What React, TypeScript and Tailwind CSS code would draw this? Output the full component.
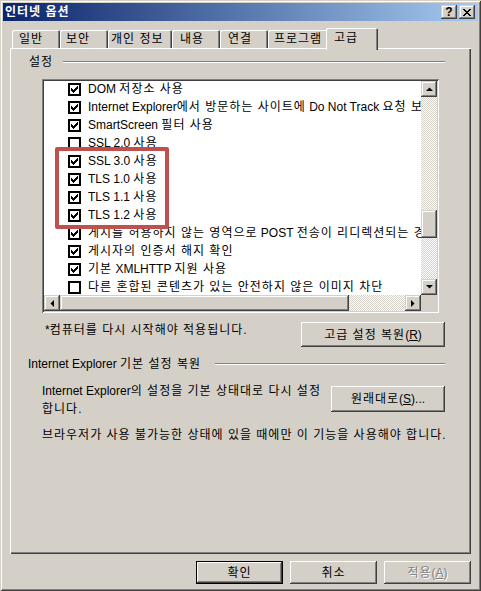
import React from 'react';

const raised = 'shadow-[inset_-1px_-1px_0_#404040,inset_1px_1px_0_#fff,inset_-2px_-2px_0_#808080,inset_2px_2px_0_#d4d0c8]';
const scrollBtn = 'shadow-[inset_-1px_-1px_0_#404040,inset_1px_1px_0_#d4d0c8,inset_-2px_-2px_0_#808080,inset_2px_2px_0_#fff]';
const checker = 'bg-[image:repeating-conic-gradient(#fff_0%_25%,#d4d0c8_0%_50%)] bg-[length:2px_2px]';

// Gulim is wider than Noto's hangul: give hangul runs (and the spaces inside them) a little tracking
function K(s: string) {
  return s.split(/([가-힣]+(?:\s+[가-힣]+)*)/).map((part, i) =>
    /[가-힣]/.test(part) ? <span key={i} className="tracking-[1px]">{part}</span> : part
  );
}

const rows: { label: string; on: boolean }[] = [
  { label: 'DOM 저장소 사용', on: true },
  { label: 'Internet Explorer에서 방문하는 사이트에 Do Not Track 요청 보내기', on: true },
  { label: 'SmartScreen 필터 사용', on: true },
  { label: 'SSL 2.0 사용', on: false },
  { label: 'SSL 3.0 사용', on: true },
  { label: 'TLS 1.0 사용', on: true },
  { label: 'TLS 1.1 사용', on: true },
  { label: 'TLS 1.2 사용', on: true },
  { label: '게시를 허용하지 않는 영역으로 POST 전송이 리디렉션되는 경우 경고', on: true },
  { label: '게시자의 인증서 해지 확인', on: true },
  { label: '기본 XMLHTTP 지원 사용', on: true },
  { label: '다른 혼합된 콘텐츠가 있는 안전하지 않은 이미지 차단', on: false },
];

const tabs = [
  { label: '일반', w: 'w-[48px] pl-[7px]' },
  { label: '보안', w: 'w-[48px] pl-[6px]' },
  { label: '개인 정보', w: 'w-[64px] pl-[3px]' },
  { label: '내용', w: 'w-[48px] pl-[8px]' },
  { label: '연결', w: 'w-[48px] pl-[8px]' },
  { label: '프로그램', w: 'w-[60px] pl-[6px]' },
];

function Check({ on }: { on: boolean }) {
  return (
    <span className="w-[13px] h-[13px] border-2 border-black bg-white flex items-center justify-center shrink-0">
      {on && (
        <svg width="7" height="7" viewBox="0 0 7 7" shapeRendering="crispEdges">
          {[2, 3, 4, 3, 2, 1, 0].map((y, x) => (
            <rect key={x} x={x} y={y} width="1" height="3" fill="#000" />
          ))}
        </svg>
      )}
    </span>
  );
}

function Arrow({ dir }: { dir: 'up' | 'down' | 'left' | 'right' }) {
  const pts = {
    up: '0,4 7,4 3.5,0.5',
    down: '0,0 7,0 3.5,3.5',
    left: '4,0 4,7 0.5,3.5',
    right: '0,0 0,7 3.5,3.5',
  }[dir];
  const v = dir === 'up' || dir === 'down';
  return (
    <svg width={v ? 7 : 4} height={v ? 4 : 7} viewBox={v ? '0 0 7 4' : '0 0 4 7'}>
      <polygon points={pts} fill="#000" />
    </svg>
  );
}

function Btn({ children, className = '', def = false, disabled = false }: { children: React.ReactNode; className?: string; def?: boolean; disabled?: boolean }) {
  return (
    <div className={`${def ? 'border border-black' : ''} ${className} flex`}>
      <div className={`flex-1 flex items-center justify-center ${raised} leading-[14px] ${disabled ? 'text-[#808080] [text-shadow:1px_1px_0_#fff]' : ''}`}>
        {children}
      </div>
    </div>
  );
}

function GroupHead({ label, pl, gap }: { label: string; pl: string; gap: string }) {
  return (
    <div className={`flex items-center h-[16px] ${pl} pr-[26px]`}>
      <span className="leading-[16px] whitespace-nowrap">{K(label)}</span>
      <div className={`flex-1 ${gap} border-t border-t-[#808080] border-b border-b-white`} />
    </div>
  );
}

export default function App() {
  return (
    <div className="w-[481px] h-[591px] bg-[#d4d0c8] p-[3px] flex flex-col text-[12px] text-black select-none font-[family-name:'Liberation_Sans','Noto_Sans_CJK_KR',sans-serif] shadow-[inset_1px_1px_0_#d4d0c8,inset_-1px_-1px_0_#404040,inset_2px_2px_0_#fff,inset_-2px_-2px_0_#808080]">
      {/* title bar */}
      <div className="h-[18px] shrink-0 flex items-center pl-[2px] pr-[3px] bg-[linear-gradient(to_right,#0a246a,#a6caf0)]">
        <span className="flex-1 text-white font-bold leading-[18px]">{K('인터넷 옵션')}</span>
        <div className={`w-[16px] h-[14px] flex items-center justify-center ${scrollBtn} bg-[#d4d0c8]`}>
          <span className="font-bold text-[12px] leading-[12px] font-[family-name:'Liberation_Sans',sans-serif]">?</span>
        </div>
        <div className={`ml-[2px] w-[16px] h-[14px] flex items-center justify-center ${scrollBtn} bg-[#d4d0c8]`}>
          <svg width="8" height="7" viewBox="0 0 8 7" shapeRendering="crispEdges">
            <path d="M0 0h2l2 2.5 2-2.5h2l-3 3.5 3 3.5h-2l-2-2.5-2 2.5h-2l3-3.5z" fill="#000" />
          </svg>
        </div>
      </div>

      {/* tabs */}
      <div className="mt-[7px] h-[20px] shrink-0 flex items-start pl-[9px]">
        {tabs.map(t => (
          <div key={t.label} className={`${t.w} mt-[2px] h-[18px] rounded-t-[2px] leading-[18px] whitespace-nowrap shadow-[inset_1px_1px_0_#fff,inset_-1px_0_0_#404040,inset_-2px_0_0_#808080]`}>
            {K(t.label)}
          </div>
        ))}
        <div className="relative z-10 -ml-[2px] w-[52px] h-[22px] pl-[8px] pb-[2px] leading-[20px] bg-[#d4d0c8] rounded-t-[2px] shadow-[inset_1px_1px_0_#fff,inset_-1px_0_0_#404040,inset_-2px_0_0_#808080]">
          {K('고급')}
        </div>
      </div>

      {/* panel */}
      <div className="mx-[7px] h-[506px] shrink-0 pt-[6px] flex flex-col shadow-[inset_1px_1px_0_#fff,inset_-1px_-1px_0_#404040,inset_-2px_-2px_0_#808080]">
        <GroupHead label="설정" pl="pl-[19px]" gap="ml-[10px]" />

        {/* list box */}
        <div className="relative mt-[9px] ml-[32px] w-[397px] h-[234px] p-[2px] flex flex-col bg-white shadow-[inset_1px_1px_0_#808080,inset_-1px_-1px_0_#fff,inset_2px_2px_0_#404040,inset_-2px_-2px_0_#d4d0c8]">
          <div className="flex flex-1 min-h-0">
            <div className="flex-1 overflow-hidden">
              <div className="-mt-[1px] flex flex-col">
                {rows.map(r => (
                  <div key={r.label} className="h-[18px] flex items-center pl-[24px] gap-[7px] whitespace-nowrap">
                    <Check on={r.on} />
                    <span className="leading-[18px]">{K(r.label)}</span>
                  </div>
                ))}
              </div>
            </div>
            <div className="w-[16px] flex flex-col">
              <div className={`h-[16px] flex items-center justify-center bg-[#d4d0c8] ${scrollBtn}`}><Arrow dir="up" /></div>
              <div className={`h-[113px] ${checker}`} />
              <div className={`h-[28px] bg-[#d4d0c8] ${scrollBtn}`} />
              <div className={`flex-1 ${checker}`} />
              <div className={`h-[16px] flex items-center justify-center bg-[#d4d0c8] ${scrollBtn}`}><Arrow dir="down" /></div>
            </div>
          </div>
          <div className="h-[16px] flex">
            <div className={`w-[16px] flex items-center justify-center bg-[#d4d0c8] ${scrollBtn}`}><Arrow dir="left" /></div>
            <div className={`w-[289px] bg-[#d4d0c8] ${scrollBtn}`} />
            <div className={`flex-1 ${checker}`} />
            <div className={`w-[16px] flex items-center justify-center bg-[#d4d0c8] ${scrollBtn}`}><Arrow dir="right" /></div>
            <div className="w-[16px] bg-[#d4d0c8]" />
          </div>
          {/* annotation */}
          <div className="absolute left-[13px] top-[68px] w-[114px] h-[82px] border-4 border-[#c0504d] rounded-[2px]" />
        </div>

        <div className="mt-[9px] flex items-start justify-between pl-[35px] pr-[26px]">
          <span className="leading-[16px]">{K('*컴퓨터를 다시 시작해야 적용됩니다.')}</span>
          <Btn className="w-[144px] h-[25px]">
            {K('고급 설정 복원')}(<span className="underline">R</span>)
          </Btn>
        </div>

        <div className="mt-[9px]">
          <GroupHead label="Internet Explorer 기본 설정 복원" pl="pl-[18px]" gap="ml-[14px]" />
        </div>

        <div className="mt-[10px] flex items-start justify-between pl-[32px] pr-[26px]">
          <p className="leading-[18px]">
            {K('Internet Explorer의 설정을 기본 상태대로 다시 설정')}
            <br />
            {K('합니다.')}
          </p>
          <Btn className="mt-[4px] w-[114px] h-[26px]">
            {K('원래대로')}(<span className="underline">S</span>)...
          </Btn>
        </div>

        <p className="mt-[8px] pl-[32px] leading-[18px] whitespace-nowrap">{K('브라우저가 사용 불가능한 상태에 있을 때에만 이 기능을 사용해야 합니다.')}</p>
      </div>

      {/* dialog buttons */}
      <div className="mt-[7px] h-[23px] shrink-0 flex justify-end gap-[7px] pr-[7px]">
        <Btn def className="w-[87px]">{K('확인')}</Btn>
        <Btn className="w-[87px]">{K('취소')}</Btn>
        <Btn disabled className="w-[87px]">
          {K('적용')}(<span className="underline">A</span>)
        </Btn>
      </div>
    </div>
  );
}
